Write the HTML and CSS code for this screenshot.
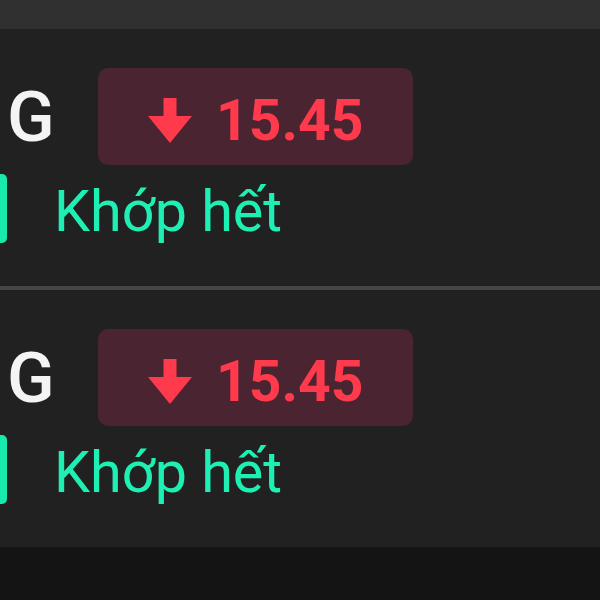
FILE: index.html
```html
<!DOCTYPE html>
<html lang="vi">
<head>
    <meta charset="UTF-8">
    <meta name="viewport" content="width=device-width, initial-scale=1.0">
    <title>Lệnh khớp</title>
    <link rel="stylesheet" href="styles.css">
</head>
<body>

    <div class="top-bar"></div>

    <div class="order-card">
        <div class="order-head">
            <span class="ticker">G</span>
            <div class="price-badge">
                <svg class="arrow-down" width="44" height="45" viewBox="0 0 44 45">
                    <path d="M15.5 0 H28.5 V18 H44 L22 45 L0 18 H15.5 Z" fill="#ff3a4c"/>
                </svg>
                <span class="price">15.45</span>
            </div>
        </div>
        <div class="order-status">
            <span class="status-mark"></span>
            <span class="status-text">Khớp hết</span>
        </div>
    </div>

    <div class="divider"></div>

    <div class="order-card">
        <div class="order-head">
            <span class="ticker">G</span>
            <div class="price-badge">
                <svg class="arrow-down" width="44" height="45" viewBox="0 0 44 45">
                    <path d="M15.5 0 H28.5 V18 H44 L22 45 L0 18 H15.5 Z" fill="#ff3a4c"/>
                </svg>
                <span class="price">15.45</span>
            </div>
        </div>
        <div class="order-status">
            <span class="status-mark"></span>
            <span class="status-text">Khớp hết</span>
        </div>
    </div>

</body>
</html>
```

FILE: styles.css
```css
body {
    margin: 0;
    background-color: #141414;
    font-family: Roboto, 'Noto Sans', sans-serif;
}

/* thanh tiêu đề phía trên */
.top-bar {
    height: 29px;
    background-color: #303030;
}

.order-card {
    height: 257px;
    box-sizing: border-box;
    padding-top: 39px;
    background-color: #212121;
}

.divider {
    height: 4px;
    background-color: #454545;
}

.order-head {
    display: flex;
    align-items: center;
}

.ticker {
    width: 98px;
    padding-left: 7px;
    box-sizing: border-box;
    font-size: 70px;
    font-weight: 500;
    line-height: 1;
    color: #f4f4f4;
}

.price-badge {
    display: flex;
    align-items: center;
    gap: 24px;
    width: 315px;
    height: 97px;
    box-sizing: border-box;
    padding: 8px 0 0 50px;
    border-radius: 10px;
    background-color: #4a2430;
}

.arrow-down {
    display: block;
}

.price {
    font-size: 57px;
    font-weight: 700;
    line-height: 1;
    color: #ff3a4c;
}

.order-status {
    display: flex;
    align-items: center;
    margin-top: 9px;
}

.status-mark {
    width: 7px;
    height: 69px;
    border-radius: 0 5px 5px 0;
    background-color: #17eaac;
}

.status-text {
    margin-left: 47px;
    padding-top: 6px;
    font-size: 57.5px;
    line-height: 1;
    color: #1ef0b4;
}
```
